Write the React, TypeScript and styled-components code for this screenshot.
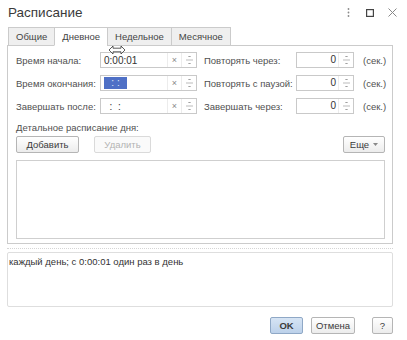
import { FC, Fragment } from "react";
import styled, { createGlobalStyle } from "styled-components";

const GlobalStyle = createGlobalStyle`
  body {
    margin: 0;
    background: #fff;
    font-family: "Liberation Sans", Arial, sans-serif;
  }
`;

const Spinner: FC = () => (
  <StyledSpin>
    <svg width="7" height="12" viewBox="0 0 7 12">
      <path d="M2.5 3 L3.5 2 L4.5 3" fill="none" stroke="#777" strokeWidth="0.9" />
      <line x1="0" y1="6" x2="7" y2="6" stroke="#bbb" strokeWidth="1" />
      <path d="M2.5 9 L3.5 10 L4.5 9" fill="none" stroke="#777" strokeWidth="0.9" />
    </svg>
  </StyledSpin>
);

const TimeField: FC<{ value?: string; selected?: boolean }> = ({ value, selected }) => (
  <StyledTimeField>
    <TextPart>{selected ? <Selection>: :</Selection> : value}</TextPart>
    <ClearPart>×</ClearPart>
    <Spinner />
  </StyledTimeField>
);

const NumberField: FC = () => (
  <StyledNumberField>
    <NumberText>0</NumberText>
    <Spinner />
  </StyledNumberField>
);

const rows = [
  { left: "Время начала:", value: "0:00:01", right: "Повторять через:" },
  { left: "Время окончания:", selected: true, right: "Повторять с паузой:" },
  { left: "Завершать после:", value: "  :  :", right: "Завершать через:" },
];

const App: FC = () => (
  <Window>
    <GlobalStyle />
    <TitleBar>
      <Title>Расписание</Title>
      <WindowIcons>
        <IconBox>
          <svg width="3" height="9" viewBox="0 0 3 9">
            <circle cx="1.5" cy="1" r="0.9" fill="#8a8a8a" />
            <circle cx="1.5" cy="4.5" r="0.9" fill="#8a8a8a" />
            <circle cx="1.5" cy="8" r="0.9" fill="#8a8a8a" />
          </svg>
        </IconBox>
        <IconBox>
          <svg width="8" height="8" viewBox="0 0 8 8">
            <rect x="0.6" y="0.6" width="6.8" height="6.8" fill="none" stroke="#444" strokeWidth="1.2" />
          </svg>
        </IconBox>
        <IconBox>
          <svg width="9" height="9" viewBox="0 0 9 9">
            <path d="M0.5 0.5 L8.5 8.5 M8.5 0.5 L0.5 8.5" stroke="#888" strokeWidth="1" />
          </svg>
        </IconBox>
      </WindowIcons>
    </TitleBar>

    <TabsRow>
      <Tab>Общие</Tab>
      <Tab active>Дневное</Tab>
      <Tab>Недельное</Tab>
      <Tab>Месячное</Tab>
    </TabsRow>

    <Panel>
      <FieldsGrid>
        {rows.map((r) => (
          <Fragment key={r.left}>
            <Label>{r.left}</Label>
            <TimeField value={r.value} selected={r.selected} />
            <Label>{r.right}</Label>
            <NumberField />
            <Label>(сек.)</Label>
          </Fragment>
        ))}
      </FieldsGrid>

      <SectionLabel>Детальное расписание дня:</SectionLabel>
      <ButtonRow>
        <Button width={63}>Добавить</Button>
        <Button width={57} disabled>
          Удалить
        </Button>
        <MoreButton>
          Еще
          <svg width="5" height="3" viewBox="0 0 5 3">
            <path d="M0 0 L5 0 L2.5 3 Z" fill="#888" />
          </svg>
        </MoreButton>
      </ButtonRow>
      <ListBox />
    </Panel>

    <Separator />
    <Summary>каждый день; с 0:00:01 один раз в день</Summary>

    <Footer>
      <Button width={33} primary>
        OK
      </Button>
      <Button width={44}>Отмена</Button>
      <HelpButton width={21}>?</HelpButton>
    </Footer>

    <Cursor>
      <svg width="18" height="10" viewBox="0 0 18 10">
        <path
          d="M1 5 L5 1 L5 3.2 L13 3.2 L13 1 L17 5 L13 9 L13 6.8 L5 6.8 L5 9 Z"
          fill="#fff"
          stroke="#333"
          strokeWidth="0.8"
        />
      </svg>
    </Cursor>
  </Window>
);

const Window = styled.div`
  position: relative;
  width: 407px;
  height: 340px;
  overflow: hidden;
  display: flex;
  flex-direction: column;
  font-size: 9.5px;
  color: #4a4a4a;
`;

const TitleBar = styled.div`
  height: 27px;
  display: flex;
  align-items: center;
  justify-content: space-between;
  padding: 0 4px 2px 8px;
  box-sizing: border-box;
`;

const Title = styled.h1`
  margin: 0;
  font-size: 13.5px;
  font-weight: normal;
  color: #3a3a3a;
`;

const WindowIcons = styled.div`
  display: flex;
  align-items: center;
`;

const IconBox = styled.span`
  width: 22px;
  height: 14px;
  display: flex;
  align-items: center;
  justify-content: center;
`;

const TabsRow = styled.div`
  display: flex;
  padding-left: 8px;
  height: 18px;
`;

const Tab = styled.div<{ active?: boolean }>`
  position: relative;
  z-index: 1;
  height: 19px;
  box-sizing: border-box;
  padding: 0 7px;
  margin-right: -1px;
  line-height: 18px;
  color: #444;
  border: 1px solid #cbcbcb;
  border-bottom: 1px solid ${(p) => (p.active ? "#fff" : "#cbcbcb")};
  background: ${(p) => (p.active ? "#fff" : "#efefef")};
`;

const Panel = styled.div`
  margin: 0 14px 0 7px;
  border: 1px solid #cbcbcb;
  padding: 6px 7px 4px 8px;
`;

const FieldsGrid = styled.div`
  display: grid;
  grid-template-columns: 84px 104px 92px 67px 1fr;
  grid-auto-rows: 16px;
  row-gap: 7px;
  align-items: center;
`;

const Label = styled.span`
  white-space: nowrap;
  color: #505050;
`;

const StyledTimeField = styled.div`
  display: flex;
  width: 97px;
  height: 16px;
  box-sizing: border-box;
  border: 1px solid #c9c9c9;
  background: #fff;
`;

const TextPart = styled.div`
  flex: 1;
  padding-left: 3px;
  display: flex;
  align-items: center;
  color: #333;
  font-size: 10px;
  white-space: pre;
`;

const Selection = styled.span`
  display: inline-block;
  width: 23px;
  height: 12px;
  line-height: 12px;
  text-align: center;
  background: #4f70c6;
  color: #dfe6f7;
`;

const ClearPart = styled.div`
  width: 13px;
  border-left: 1px solid #ececec;
  display: flex;
  align-items: center;
  justify-content: center;
  font-size: 9px;
  color: #888;
`;

const StyledSpin = styled.div`
  width: 14px;
  border-left: 1px solid #ececec;
  display: flex;
  align-items: center;
  justify-content: center;
`;

const StyledNumberField = styled.div`
  display: flex;
  width: 58px;
  height: 16px;
  box-sizing: border-box;
  border: 1px solid #c9c9c9;
  background: #fff;
`;

const NumberText = styled.div`
  flex: 1;
  text-align: right;
  padding-right: 2px;
  line-height: 14px;
  font-size: 10px;
  color: #333;
`;

const SectionLabel = styled.div`
  margin-top: 8px;
  line-height: 12px;
  color: #505050;
`;

const ButtonRow = styled.div`
  display: flex;
  gap: 15px;
  margin-top: 2px;
`;

const Button = styled.button<{ width: number; primary?: boolean }>`
  width: ${(p) => p.width}px;
  height: 17px;
  padding: 0;
  font-family: inherit;
  font-size: 9.5px;
  font-weight: ${(p) => (p.primary ? "bold" : "normal")};
  color: #3a3a3a;
  border: 1px solid ${(p) => (p.primary ? "#8fa8c6" : "#b5b5b5")};
  border-radius: 2px;
  background: ${(p) =>
    p.primary
      ? "linear-gradient(#d6e4f4, #bcd1ea)"
      : "linear-gradient(#ffffff, #ececec)"};

  &:disabled {
    color: #b3b3b3;
    border-color: #dadada;
    background: #fafafa;
  }
`;

const MoreButton = styled.button`
  margin-left: auto;
  width: 42px;
  height: 17px;
  padding: 0;
  display: flex;
  align-items: center;
  justify-content: center;
  gap: 4px;
  font-family: inherit;
  font-size: 9.5px;
  color: #3a3a3a;
  border: 1px solid #b5b5b5;
  border-radius: 2px;
  background: linear-gradient(#ffffff, #ececec);
`;

const ListBox = styled.div`
  margin-top: 7px;
  height: 79px;
  box-sizing: border-box;
  border: 1px solid #cfcfcf;
`;

const Separator = styled.div`
  margin: 4px 14px 0 7px;
  border-top: 1px dotted #d5d5d5;
`;

const Summary = styled.div`
  margin: 3px 14px 0 7px;
  height: 55px;
  box-sizing: border-box;
  border: 1px solid #dedede;
  border-radius: 2px;
  padding: 3px 1px;
  color: #333;
`;

const Footer = styled.div`
  display: flex;
  justify-content: flex-end;
  align-items: center;
  gap: 8px;
  margin-top: 10px;
  padding-right: 14px;
`;

const HelpButton = styled(Button)`
  margin-left: 9px;
`;

const Cursor = styled.div`
  position: absolute;
  left: 108px;
  top: 45px;
  z-index: 5;
  line-height: 0;
`;

export default App;
